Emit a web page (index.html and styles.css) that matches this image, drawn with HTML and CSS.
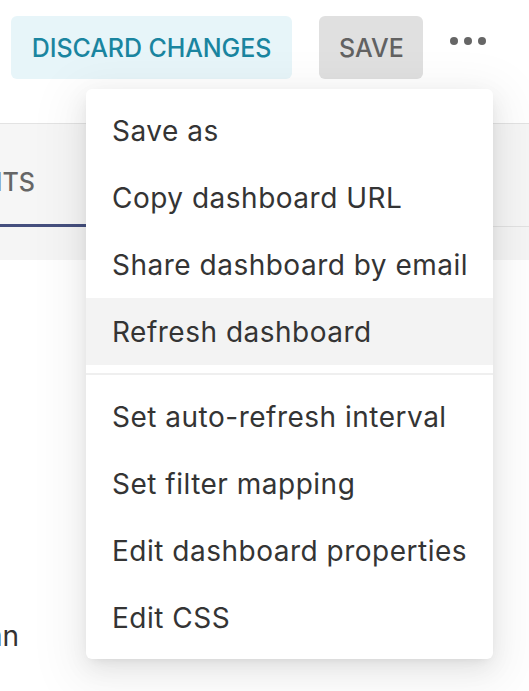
FILE: index.html
```html
<!DOCTYPE html>
<html lang="en">
<head>
<meta charset="utf-8">
<title>Dashboard menu</title>
<link rel="stylesheet" href="styles.css">
</head>
<body>
<div class="page">
  <header class="header">
    <button class="btn btn-discard">DISCARD CHANGES</button>
    <button class="btn btn-save">SAVE</button>
    <button class="more" aria-label="More options"><span></span><span></span><span></span></button>
  </header>
  <div class="tabs">
    <div class="tab active"><span class="clip">LAYOUT ELEMENTS</span></div>
  </div>
  <div class="band"></div>
  <div class="content">
    <div class="row"><span class="clip clip-n">Column</span></div>
  </div>

  <ul class="menu">
    <li class="item">Save as</li>
    <li class="item">Copy dashboard URL</li>
    <li class="item">Share dashboard by email</li>
    <li class="item hover">Refresh dashboard</li>
    <li class="divider"></li>
    <li class="item">Set auto-refresh interval</li>
    <li class="item">Set filter mapping</li>
    <li class="item">Edit dashboard properties</li>
    <li class="item">Edit CSS</li>
  </ul>
</div>
</body>
</html>
```

FILE: styles.css
```css
* { box-sizing: border-box; }
html, body {
  margin: 0;
  padding: 0;
  background: #ffffff;
  font-family: Inter, "Noto Sans", "Liberation Sans", sans-serif;
  overflow: hidden;
}
.page {
  position: relative;
  width: 529px;
  height: 691px;
  overflow: hidden;
}
.header {
  height: 124px;
  padding: 16px 0 0 11px;
  display: flex;
  align-items: flex-start;
  gap: 27px;
  border-bottom: 1px solid #e3e3e3;
  background: #fff;
}
.btn {
  height: 63px;
  border: none;
  border-radius: 6px;
  font-family: Inter, "Noto Sans", sans-serif;
  font-size: 25px;
  font-weight: 500;
  padding: 0 20px;
  cursor: pointer;
  white-space: nowrap;
}
.btn-discard {
  width: 281px;
  background: #e7f5f9;
  color: #1a85a0;
  letter-spacing: -0.1px;
}
.btn-save {
  width: 104px;
  background: #e0e0e0;
  color: #626262;
}
.more {
  height: 63px;
  border: none;
  background: transparent;
  padding: 0;
  margin-top: -7px;
  display: flex;
  align-items: center;
  gap: 6px;
}
.more span {
  width: 8px;
  height: 8px;
  border-radius: 50%;
  background: #666;
}
.tabs {
  height: 103px;
  background: #f6f6f6;
  box-shadow: inset 0 -1px #e2e2e2;
  display: flex;
}
.tab {
  width: 200px;
  display: flex;
  align-items: center;
  padding-top: 16px;
  font-size: 25px;
  font-weight: 500;
  color: #666;
}
.tab.active {
  border-bottom: 3px solid #454f7e;
}
.clip {
  width: 35px;
  overflow: hidden;
  display: flex;
  justify-content: flex-end;
  white-space: nowrap;
}
.band {
  height: 33px;
  background: #f5f5f5;
}
.content {
  padding-top: 359px;
}
.row {
  display: flex;
  font-size: 28px;
  line-height: 34px;
  color: #333;
}
.clip-n {
  width: 19px;
}
.menu {
  position: absolute;
  left: 86px;
  top: 89px;
  width: 407px;
  margin: 0;
  padding: 8px 0;
  list-style: none;
  background: #fff;
  border-radius: 6px;
  box-shadow: 0 12px 48px 16px rgba(0,0,0,0.05), 0 8px 24px rgba(0,0,0,0.08), 0 4px 10px -6px rgba(0,0,0,0.12);
}
.item {
  height: 67px;
  display: flex;
  align-items: center;
  padding-left: 26px;
  font-size: 28px;
  letter-spacing: 0.5px;
  color: #343434;
  white-space: nowrap;
}
.item.hover {
  background: #f3f3f3;
}
.divider {
  height: 2px;
  margin: 8px 0;
  background: #efefef;
}
```
